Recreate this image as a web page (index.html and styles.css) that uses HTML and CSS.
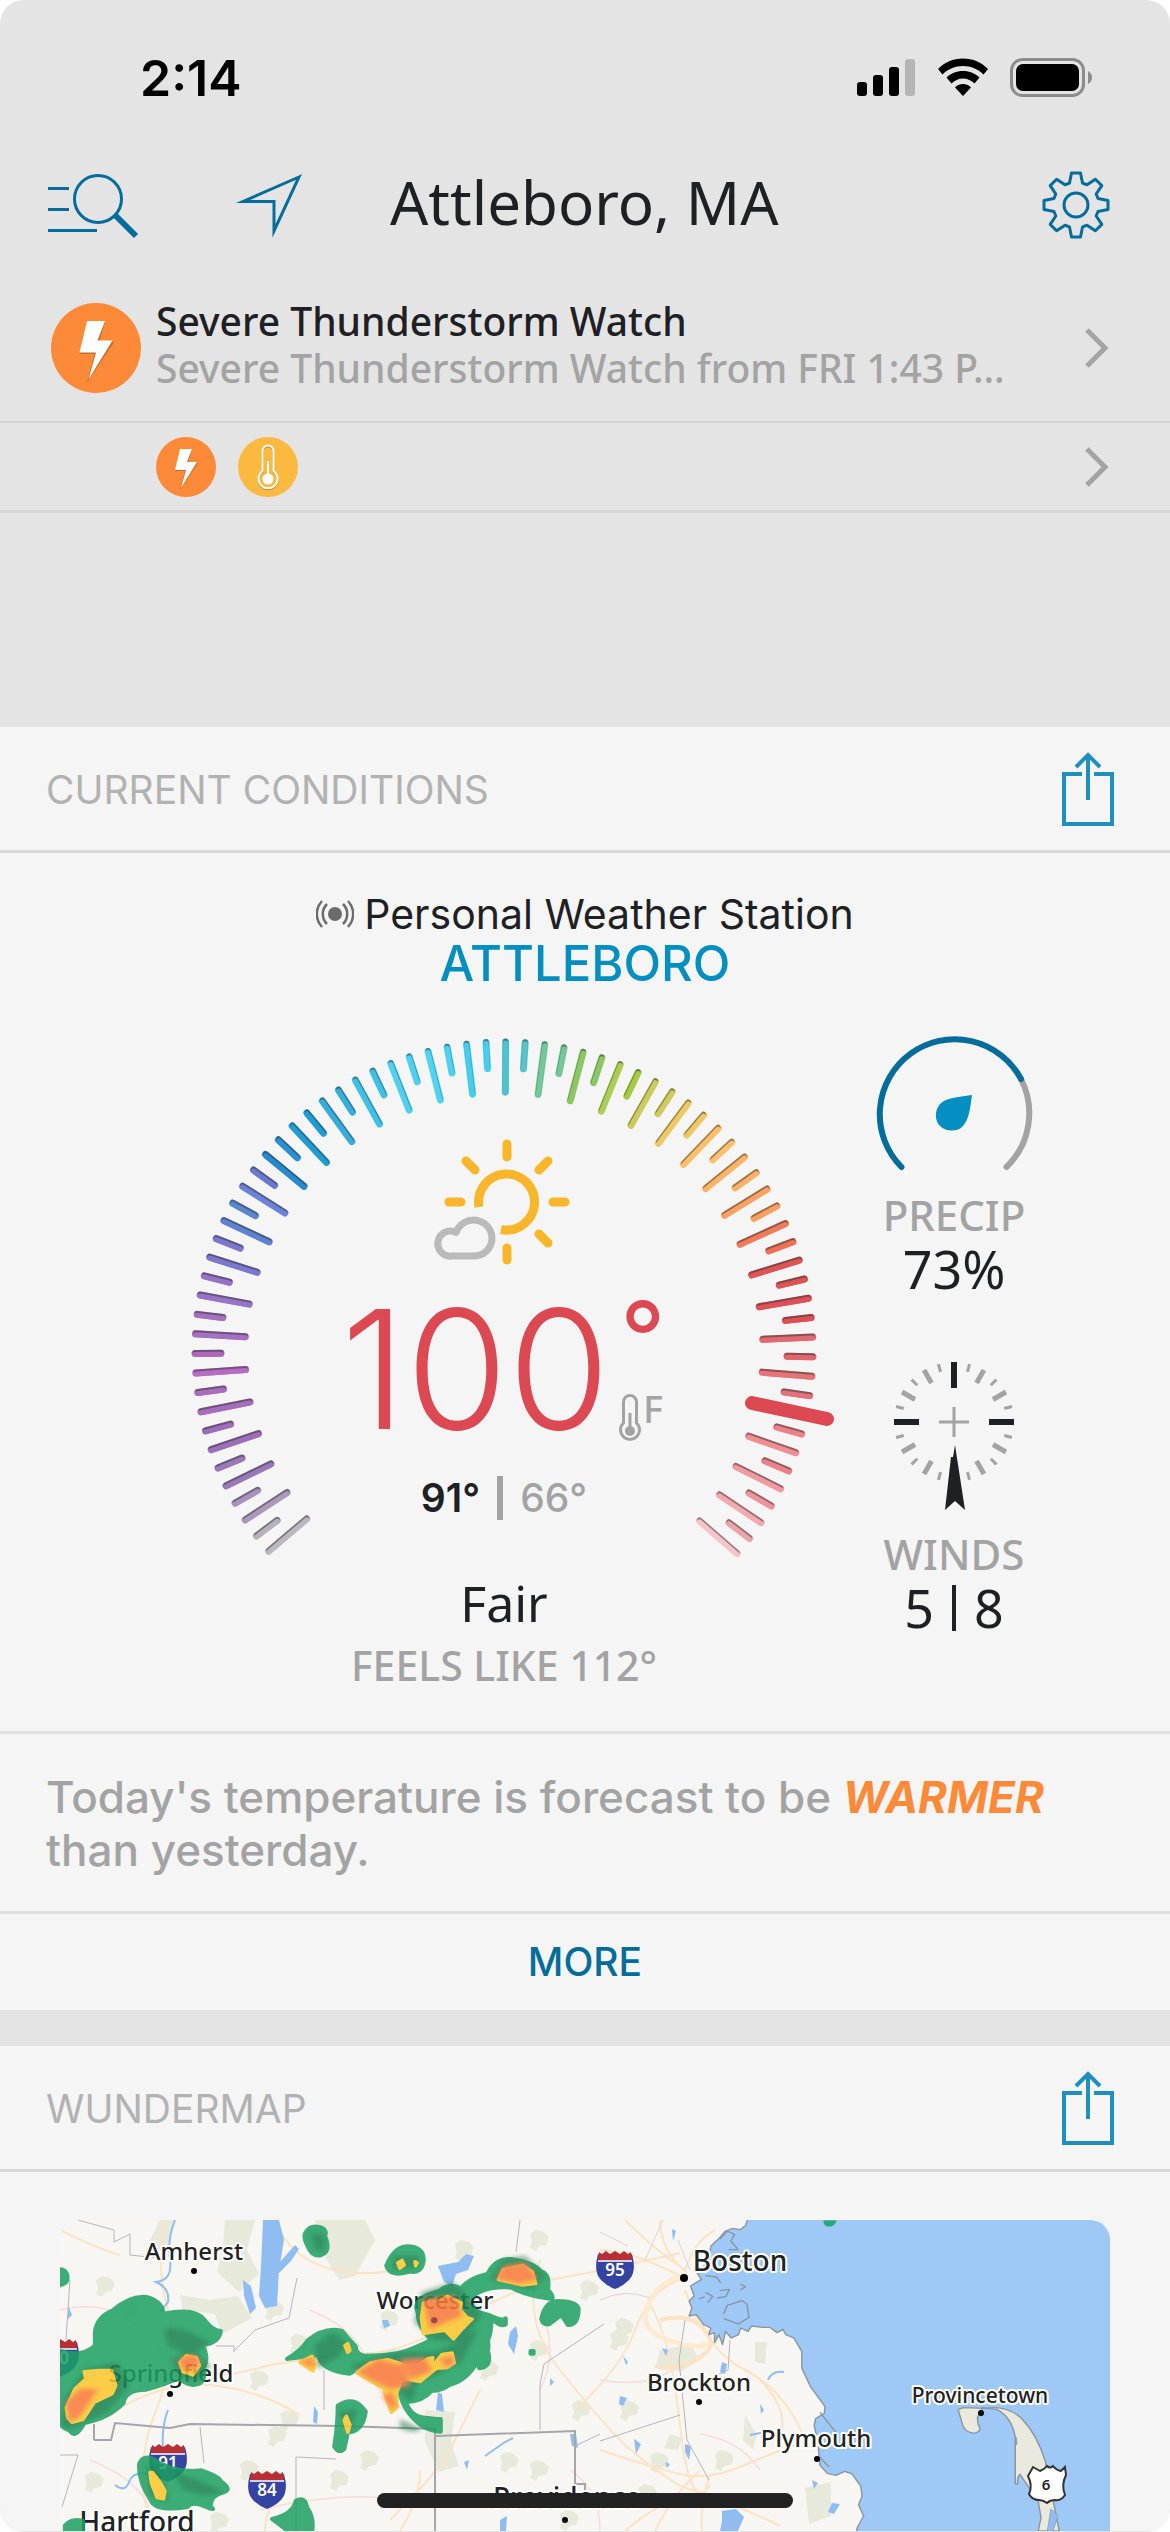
FILE: index.html
```html
<!DOCTYPE html>
<html lang="en">
<head>
<meta charset="utf-8">
<meta name="viewport" content="width=device-width, initial-scale=1">
<title>Attleboro, MA</title>
<link rel="stylesheet" href="styles.css">
</head>
<body>
<div class="screen">
  <div class="status">
    <time class="clock">2:14</time>
    <svg class="status-icons" viewBox="0 0 238 44" aria-hidden="true">
      <rect x="1" y="26" width="10" height="14" rx="3"/><rect x="17" y="19" width="10" height="21" rx="3"/><rect x="33" y="11" width="10" height="29" rx="3"/><rect x="49" y="3" width="10" height="37" rx="3" fill="#b5b5b5"/>
      <path d="M107 2.500c10 0 18.500 4 25 10.500l-4.500 5.500c-5.500-5.500-12.500-8.500-20.500-8.500s-15 3-20.500 8.500l-4.500-5.500c6.500-6.500 15-10.500 25-10.500z"/>
      <path d="M107 15c7 0 12 2.500 16.500 6.500l-5 6c-3-3-7-5-11.500-5s-8.500 2-11.500 5l-5-6c4.500-4 9.500-6.500 16.500-6.500z"/>
      <path d="M107 28c3.500 0 6 1.500 8 3.500l-8 8.500-8-8.500c2-2 4.500-3.500 8-3.500z"/>
      <rect x="155.500" y="3.500" width="72" height="36" rx="11" fill="none" stroke="#8c8c8c" stroke-width="3"/>
      <rect x="160" y="8" width="63" height="27" rx="7"/>
      <path d="M232 15c3 2 4 4 4 6.500s-1 5-4 6.500z" fill="#8c8c8c"/>
    </svg>
  </div>

  <header class="toolbar">
    <button class="icon-btn search" aria-label="Search locations">
      <svg viewBox="0 0 92 68"><g fill="none" stroke="#046d9c" stroke-width="3"><path d="M0 17.500h21M0 38.500h21M0 59.500h49"/><circle cx="50" cy="28" r="23.500"/><path d="M67 44l21 21" stroke-width="6"/></g></svg>
    </button>
    <button class="icon-btn locate" aria-label="Use my location">
      <svg viewBox="0 0 68 68"><path d="M65 6L9 30.500h31V60z" fill="none" stroke="#046d9c" stroke-width="3" stroke-miterlimit="10"/></svg>
    </button>
    <h1 class="city">Attleboro, MA</h1>
    <button class="icon-btn" aria-label="Settings">
      <svg viewBox="-34 -34 68 68"><g fill="none" stroke="#046d9c" stroke-width="3" stroke-linejoin="round"><path d="M-6.500-22L-4.500-32H4.500L6.500-22L11-20.200L19.400-25.800L25.800-19.400L20.200-11L22-6.500L32-4.500V4.500L22 6.500L20.200 11L25.800 19.400L19.400 25.800L11 20.200L6.500 22L4.500 32H-4.500L-6.500 22L-11 20.200L-19.400 25.800L-25.800 19.400L-20.200 11L-22 6.500L-32 4.500V-4.500L-22-6.500L-20.200-11L-25.800-19.400L-19.400-25.800L-11-20.200z"/><circle r="12"/></g></svg>
    </button>
  </header>

  <a class="alert alert-main" href="#alert">
    <svg class="badge-lg" viewBox="0 0 60 60" aria-hidden="true"><circle cx="30" cy="30" r="30" fill="#fd8a39"/><path d="M24 13h12l-4 13h10L24 53l5-19H19z" fill="#a0561f" opacity=".6"/><path d="M24 12h12l-5 13h10L25 51l5-18H19z" fill="#fff"/></svg>
    <span class="alert-text">
      <strong class="alert-title">Severe Thunderstorm Watch</strong>
      <span class="alert-detail">Severe Thunderstorm Watch from FRI 1:43 P...</span>
    </span>
    <svg class="chevron" viewBox="0 0 24 40" aria-hidden="true"><path d="M2 2l18 18L2 38" fill="none" stroke="#a3a3a3" stroke-width="5"/></svg>
  </a>
  <a class="alert alert-more" href="#alerts" aria-label="All alerts">
    <svg class="badge-sm" viewBox="0 0 60 60" aria-hidden="true"><circle cx="30" cy="30" r="30" fill="#fd8a39"/><path d="M24 13h12l-4 13h10L24 53l5-19H19z" fill="#a0561f" opacity=".6"/><path d="M24 12h12l-5 13h10L25 51l5-18H19z" fill="#fff"/></svg>
    <svg class="badge-sm" viewBox="0 0 60 60" aria-hidden="true"><circle cx="30" cy="30" r="30" fill="#fbb940"/><g fill="none" stroke="#a8731a" stroke-width="2" transform="translate(0 1)" opacity=".7"><path d="M24.500 34V14a5.500 5.500 0 0 1 11 0v20a9.500 9.500 0 1 1-11 0z"/></g><path d="M24.500 34V14a5.500 5.500 0 0 1 11 0v20a9.500 9.500 0 1 1-11 0z" fill="none" stroke="#fff" stroke-width="2"/><path d="M30 24v18" stroke="#fff" stroke-width="2"/><circle cx="30" cy="42" r="5.500" fill="#fff"/></svg>
    <svg class="chevron" viewBox="0 0 24 40" aria-hidden="true"><path d="M2 2l18 18L2 38" fill="none" stroke="#a3a3a3" stroke-width="5"/></svg>
  </a>

  <main class="cards">
    <section class="card">
      <div class="card-head">
        <h2 class="card-title">CURRENT CONDITIONS</h2>
        <button class="icon-btn share" aria-label="Share current conditions">
          <svg viewBox="0 0 54 76"><g fill="none" stroke="#1f90bd" stroke-width="4"><path d="M21 22H3v50h48V22H33"/><path d="M27 48V4M15 15L27 3l12 12"/></g></svg>
        </button>
      </div>
      <div class="conditions">
        <div class="station">
          <svg class="signal" viewBox="0 0 38 28" aria-hidden="true"><circle cx="19" cy="14" r="7" fill="#6b6b6b"/><g fill="none" stroke="#6b6b6b" stroke-width="2.500"><path d="M11 4a14 14 0 0 0 0 20M27 4a14 14 0 0 1 0 20M6 1a19 19 0 0 0 0 26M32 1a19 19 0 0 1 0 26"/></g></svg>
          <span>Personal Weather Station</span>
        </div>
        <a class="station-name" href="#station">ATTLEBORO</a>
        <div class="dials">
          <div class="gauge">
            <svg class="gauge-ring" viewBox="0 0 648 560" aria-hidden="true">
              <g id="ticks" stroke-linecap="round"></g>
              <path d="M572 374L647 390" stroke="#dc4952" stroke-width="14" stroke-linecap="round"/>
            </svg>
            <div class="readings">
              <svg class="sky" viewBox="0 0 148 128" aria-hidden="true">
                <g fill="none" stroke="#fab62b" stroke-width="9"><path d="M49 70A28 28 0 1 1 71 92.500"/><g stroke-linecap="round"><path d="M77 7v13M77 111v12M19 65h12M123 65h12M36 24l9 9M118 24l-9 9M118 106l-9-9"/></g></g>
                <path d="M22 119a12.500 12.500 0 1 1 4-23.500A18.500 18.500 0 0 1 62 101a18 18 0 0 1-17 18z" fill="none" stroke="#bababa" stroke-width="7" stroke-linejoin="round"/>
              </svg>
              <div class="temp">
                <span class="temp-value">100</span>
                <span class="temp-side">
                  <span class="degree">°</span>
                  <span class="unit">
                    <svg class="thermo" viewBox="0 0 22 50" aria-hidden="true"><path d="M4.500 29V8a6.500 6.500 0 0 1 13 0v21a9.500 9.500 0 1 1-13 0z" fill="none" stroke="#a3a3a3" stroke-width="3"/><path d="M11 19v18" stroke="#a3a3a3" stroke-width="3"/><circle cx="11" cy="37" r="5" fill="#a3a3a3"/></svg>
                    <span class="unit-letter">F</span>
                  </span>
                </span>
              </div>
              <div class="hilo"><span class="hi">91°</span><span class="bar"></span><span class="lo">66°</span></div>
              <div class="sky-text">Fair</div>
              <div class="feels">FEELS LIKE 112°</div>
            </div>
          </div>
          <div class="stats">
            <svg class="precip" viewBox="0 0 160 150" aria-hidden="true"><g fill="none" stroke-width="6" stroke-linecap="round"><path d="M147 50A75 75 0 0 1 132.500 138" stroke="#a3a3a3"/><path d="M27.500 138A75 75 0 1 1 147 50" stroke="#046d9c"/></g><path d="M98 66c-15 2-26 3-32 9-6 7-5 17 0 22 6 6 18 6 23 0 6-7 7-16 9-31z" fill="#048fc2"/></svg>
            <div class="stat-label">PRECIP</div>
            <div class="stat-value">73%</div>
            <svg class="compass" viewBox="0 0 160 168" aria-hidden="true">
              <g id="rose" stroke="#a3a3a3" fill="none">
                <path d="M65 72h30M80 57v30" stroke-width="3"/>
              </g>
              <path d="M80 12v26M20 72h25M115 72h25" stroke="#1e2024" stroke-width="6"/>
              <path d="M81 95l10 65-10-9-10 9 6-53h2z" fill="#1e2024"/>
            </svg>
            <div class="stat-label">WINDS</div>
            <div class="stat-value winds"><span>5</span><span class="thin-bar"></span><span>8</span></div>
          </div>
        </div>
      </div>
      <p class="forecast">Today's temperature is forecast to be <em class="warmer">WARMER</em> than yesterday.</p>
      <button class="more">MORE</button>
    </section>

    <section class="card">
      <div class="card-head">
        <h2 class="card-title">WUNDERMAP</h2>
        <button class="icon-btn share" aria-label="Share map">
          <svg viewBox="0 0 54 76"><g fill="none" stroke="#1f90bd" stroke-width="4"><path d="M21 22H3v50h48V22H33"/><path d="M27 48V4M15 15L27 3l12 12"/></g></svg>
        </button>
      </div>
      <a class="map" href="#map" aria-label="Open radar map">
        <svg viewBox="0 0 1050 311">
          <defs>
            <filter id="soft"><feGaussianBlur stdDeviation="7"/></filter>
            <g id="interstate"><path d="M-17-15q9 4 17 0 9 4 17 0 5 18-3 26-6 6-14 9-8-3-14-9-8-8-3-26z" fill="#3544a3"/><path d="M-16-17l3 2 4-3 4 3 5-3 5 3 4-3 4 3 3-2 1 8h-34z" fill="#b92f33"/><path d="M-17-8h34" stroke="#fff" stroke-width="1.500"/></g>
            <g id="blob"><path d="M0 4l6-4 8 2 5 5-3 8-7 1-3 5-6-3 2-6z"/></g>
          </defs>
          <rect width="1050" height="311" fill="#f8f6f2"/>

          <!-- woodland and parks -->
          <g fill="#e7e9da">
            <path d="M165 0h30l-8 30 12 24-20 18-22-20 6-24zM255 0h50l10 20-20 36-16 4-18-30zM150 80l28-4 14 22-30 16zM120 75l30 5 5 14-32-4zM365 190l30 2-4 30 8 24-20 6-14-30zM695 122l12 0-2 22-10-2zM745 268l26-6 0 34-22 8zM685 195l12 20-4 14-10-8zM600 130l30-6 10 16-20 12-24-8zM100 0l16 0-8 24-12 8-6-12zM610 214l12 4-4 12-14-2z"/>
            <use href="#blob" x="60" y="80"/><use href="#blob" x="205" y="80"/><use href="#blob" x="230" y="114"/><use href="#blob" x="36" y="56"/><use href="#blob" x="420" y="140"/><use href="#blob" x="470" y="120"/><use href="#blob" x="512" y="180"/><use href="#blob" x="470" y="240"/><use href="#blob" x="440" y="232"/><use href="#blob" x="550" y="110"/><use href="#blob" x="560" y="180"/><use href="#blob" x="578" y="264"/><use href="#blob" x="180" y="240"/><use href="#blob" x="270" y="250"/><use href="#blob" x="220" y="190"/><use href="#blob" x="300" y="230"/><use href="#blob" x="208" y="206"/><use href="#blob" x="520" y="60"/><use href="#blob" x="555" y="98"/><use href="#blob" x="655" y="230"/><use href="#blob" x="25" y="252"/><use href="#blob" x="150" y="292"/><use href="#blob" x="190" y="150"/><use href="#blob" x="320" y="90"/><use href="#blob" x="395" y="20"/><use href="#blob" x="470" y="10"/><use href="#blob" x="500" y="290"/><use href="#blob" x="590" y="232"/>
          </g>

          <!-- roads -->
          <g fill="none" stroke="#fbe3c4" stroke-width="2">
            <path d="M0 165q60-20 100-10t110-10q60-10 100-12t100-40q60-30 90-35t120-25M104 0q-8 50 4 90t-12 100-4 121M0 10q40 20 60 25M215 0q15 40 60 50t90-10M480 40q-20 60 20 110t60 70 60 46q60 20 100 40M620 60q-30 10-45 50t-60 80M590 85q20 30 30 120t30 60M625 70q20 60 60 80t60 70M540 230q60 20 85 25t60-10 50-20M650 255q-10 30-8 56M625 275q-30 10-60 36M360 250q0 30-20 61M225 260q-20 30-20 51M565 0q30 30 60 50M600 0q0 30 26 52M40 200q60-40 110-35t90 30M420 170q-20 40-30 60t-60 70M700 160q30 30 20 60M595 311q20-40 45-60M540 30q30 0 80 26M655 10q-20 10-30 40"/>
            <path d="M480 90q20 40 0 80M30 240q50 20 60 50M0 90q40-10 70 10t50 60M250 90q50 20 60 60t70 50M200 290q80-20 150-10M700 250q-20-30-60-36M540 160q60 10 80-20M510 250q30 20 30 60" stroke="#f7dcd9" stroke-width="1.500"/>
            <path d="M600 100q30-8 45 10t-10 30-40 6" stroke-width="4"/>
            <path d="M628 55q-30 5-40 30t20 35 40 4" stroke-width="5" stroke="#fdebd0"/>
          </g>
          <g fill="none" stroke="#ddd0dc" stroke-width="1">
            <path d="M540 80q25-12 50-2M585 40l18-40M618 20l12 30M540 12l28 14"/>
          </g>

          <!-- lakes and rivers -->
          <g fill="#8fbcf1">
            <path d="M203 0h16l5 20-5 30-2 36-12 2-6-12 2-30zM183 60l8 6 5 22-6 6-6-18zM235 25l4 4-8 12-16 16-3-6zM378 46l20-4 8-8 8 2-6 14-12 4-4 12-8-4zM378 172l4 2 2 18-8-2zM510 214l6 0 2 14-6-2zM450 112l6-6 2 10-4 18-6-10zM322 100h6l2 6-6 2zM254 186l4 6-1 12-4-2zM404 242l5-2-2 10zM490 158l4 4-4 4zM563 136l5 6-2 3zM560 176l7 2-4 8-4-2zM574 219l7 5-5 10zM625 224l6 2-2 14-4-8zM662 291l14-2 8 8-6 14h-18l2-10zM662 142l5 2-2 10-5-2zM752 260l6 3-4 6zM772 283l8 1-6 10-6-2zM612 9l4 2-3 10zM440 300l7-4-1 15h-6z"/>
            <path d="M602 128l6 2-2 6zM700 184l4 6-3 4zM545 30l3 3-3 5zM605 242l5 2-3 4zM8 85l4 10-4 4z"/>
          </g>
          <g fill="none" stroke="#8fbcf1" stroke-width="2">
            <path d="M115 0q-8 20-5 40t-14 22q14 6 12 20l-8 10M108 190q-8 20-4 50l-4 20M55 265q10 8 14-3t20-8M708 160q4-10 16-8M690 215l20-4M425 236l20-14 8-4"/>
          </g>

          <!-- state and county borders -->
          <g fill="none" stroke="#a5a5aa" stroke-width="2">
            <path d="M34 220l0-16M34 220h17l4-17 55 5 20-4 150 2 95 3v102M376 216l139-5v53l10 0v8"/>
            <g stroke-width="1" stroke="#b5b5bb"><path d="M18 0l36 10v12l16-8v21l28 3M140 207l4 36M236 311v-74l40 2M264 150v40M480 210v-46l4-20 60-40M174 132v-6h-18M175 130l20-20 34-12 8-40M460 0l-4 32M10 60l-4 60M540 221l80-26M625 100l-6 40 8 80 22 40M670 120l-2 30-12 6M515 226l25-12M0 235h18l-16 52"/></g>
          </g>

          <!-- ocean -->
          <g transform="translate(540 -21) scale(.3636 .3333)" stroke="#8b959f" stroke-width="4" stroke-linejoin="round">
            <path d="M410 50l-10 30-15 12-20-4-20 8-20 25-20 20-6 40-20 30-12 10 12 20-30 20 10 30-14 15 8 20-8 25 20-4 20 30 20 10-6 20 16-6v30l12-24 10 30 8-40 16 20 20-10 6-20 20 10 10-16 30 4 20 0 20 16 16-10 8 16 22 10 22 40v50l24 56 40 60-2 20-24 16-4 20 10 50 6 70 20 24 24 6 24-12 20 8 24 36 4 30-10 26 14 34-18 36-2 24 12 60h720V50z" fill="#9ec9f7"/>
            <path d="M330 120l20-24 20 10-10 20 20 26-26 0M340 345l10-26 40-14 14 10 6 40-30 20-40-16M290 230l30 4 12 18M385 255l15 8-14 10M290 280l20 12-14 20M330 275l26-4-10 22-24 4M272 300l16-6" fill="none"/>
            <path d="M605 640l44 60M600 770l30 34" fill="none"/>
            <path d="M985 632l14-6 60 2q60-10 100 30 44 50 66 130l38 208h-58l8-40-8-50-50-80-6 10-1 20-6-2v-140q-10-60-50-82l-40-6-14 30 2 20 6 14q-6 14-22 12-20-4-26-22z" fill="#eae9dd"/>
            <path d="M1145 716q-2 16 0 22l2-6zM1240 930l20 20-14 46-16 0z" fill="#8fbcf1" stroke-width="2"/>
          </g>

          <g class="label label-md" text-anchor="middle">
            <text x="134" y="40">Amherst</text><text x="375" y="89">Worcester</text><text x="111" y="162">Springfield</text>
            <text x="639" y="171">Brockton</text><text x="756" y="227">Plymouth</text>
          </g>
          <g class="label label-sm" text-anchor="middle"><text x="920" y="183">Provincetown</text></g>
          <g class="label label-lg" text-anchor="middle"><text x="680" y="51">Boston</text><text x="77" y="312">Hartford</text><text x="507" y="288">Providence</text></g>
          <g fill="#000"><circle cx="134" cy="51" r="3"/><circle cx="110" cy="174" r="3"/><circle cx="624" cy="58" r="4"/><circle cx="639" cy="182" r="3"/><circle cx="757" cy="239" r="3"/><circle cx="921" cy="193" r="3"/><circle cx="505" cy="300" r="3"/></g>
          <g class="shield">
            <use href="#interstate" x="555" y="49"/><text x="555" y="56">95</text>
            <use href="#interstate" x="207" y="269"/><text x="207" y="276">84</text>
            <use href="#interstate" x="108" y="242"/><text x="108" y="249">91</text>
            <use href="#interstate" x="0" y="137"/><text x="4" y="144">0</text>
          </g>
          <path d="M973 247l7 4q5-2 7-5 3 3 6 0 3 4 8 5l4-4 1 8q-5 10-1 20-4 6-10 5-5 0-8 3-4-3-8-3-7 0-10-6 4-8-1-18z" fill="#fff" stroke="#333" stroke-width="2"/>
          <text class="us-route" x="986" y="270">6</text>

          <!-- radar -->
          <g transform="translate(-10 -21) scale(.3571 .3333)" stroke-linejoin="round" opacity=".86">
            <g fill="#1fa163" stroke="#1fa163" stroke-width="12">
              <path d="M28 211q16 0 20 18t-10 26l-14 6zM126 400q4-46 50-66 50-46 94-40 44 12 48 50 90-20 116 20 20 30 44 32-4 36-50 42 18 40 2 70 10 50-30 50-26-6-40-20-40 20-90 34-60 0-64 40-40 46-110 60-26 50-40 24-20-10-28-20V456q60 20 98-16z"/>
              <path d="M714 104q12-26 40-20 24 8 16 26 18 46-10 58-26 8-40-30-10-20-6-34zM942 200q20-54 56-58 52 0 48 46-6 36-38 30-56 18-66-18z"/>
              <path d="M664 480q40-26 58-56 48-42 96-28 20 26 38 46 0 24 24 28 90 0 130-20 40-16 56-28-36-40-36-80-20-46 60-66 30-26 60-8 22-30 76-44 20-46 64-44 64 10 84 36 28 10 20 56 18 20 12 28-76-10-114-34-80-8-124 40 18 36 62 42 38 20 46 10v18q-16 10-40-18 0 46-10 66 8 56-30 66-30 56-78 68-20 18-50 18-22 30-72 34 18 46 54 46 32 4 44 4v38q-26 0-54-18-50-40-60-98-56-30-48-50-28-20-28-46l-64 38q-84-10-88-56z"/>
              <path d="M806 620q46-34 78 18-8 60-50 62l-10 50q-16 16-28-8 10-60 10-122zM1192 480q18-34 36-16 8 42-26 44-8-14-10-28zM1376 360q10-52 44-54 54 0 60 22 0 52-30 50l-18-30-34 28q-18 2-22-16zM250 794q10-26 36-16 60 46 138 36 54 20 54 32 34 26 8 34-38 10-36 44 14 10-4 4-50-24-60-4-90 16-104-20-36-60-32-110zM622 960q60-16 66-54 26-16 32 20 20 30 14 70H666zM42 980q20-24 50-14v36H42zM1346 456h8v8h-8z"/>
            </g>
            <g fill="#076b3d" filter="url(#soft)" opacity=".55">
              <path d="M320 390q50-10 90 20l40 20-60 40-60-30zM40 600l60-90 90-20 30 70-60 80-100 50-30-10zM740 440l50-40 40 30-20 40-60 40zM840 500l120-40 120 0 60-30 60-40-50 100-70 40-50 20-20 60-60-60-80-30zM1020 370l20-90 90-30 80 90-50 90-90-10zM1230 240l40-60 60-10 60 60-40 40zM730 100l40 10-6 50-24-10zM960 170l70 0 0 36-70 4zM340 480l60-30 50 50-40 50-50-20zM350 820l80 30 60 30-60 10-60-20zM270 790l50 60 10 60-50-20zM810 640l50-10-20 70zM980 660l60 30-20 10-40-10z"/>
            </g>
            <g fill="#fdc62c" stroke="#fdc62c" stroke-width="10">
              <path d="M46 626l24-56 30-30-4-22 40-4 36 0 12 46-10 24-50 26-32 52-30 8-12-14zM1046 312l46-6 20-14 40 20-4 20 20 24 14 4-26 28-26 32-24-26-60 10-6-48zM860 520l36-28 50-10 50 16 40-2 20-16 16-4-4 30-46 10 46-10 30-40 28-4 6 30-20 14-30 2-46 40-50-10-16 46 2 40-16 16-12-36-10-36-56-34zM1256 242l14-30 54-12 26 18 10 36-38 4zM700 490l34-18 8 24-6 20zM364 490l18-20 28 6 8 24-18 28-28-10zM280 820l8 0 20 30 14 26-4 24-18-4-16-44zM974 192l12-8 6 14-12 10zM1022 188l6 4-4 8zM826 440l8-6 6 20-6 6zM824 664l6-12 10 26-6 22z"/>
            </g>
            <g fill="#f8703a" filter="url(#soft)" opacity=".9">
              <path d="M45 610l40-40 50 0-50 80-30 20zM1044 300l90-10 20 60-90 40zM860 520l60-40 70 20 20 60-60 10zM980 480l70-5 20 40-60 26zM1250 240l20-40 60-10 36 50-50 14zM360 480l40-15 20 20-10 30-40-5zM700 490l35-14 8 30zM930 590l30-10 10 40-10 14zM1090 480l36-10 6 20-20 16z"/>
            </g>
            <circle cx="1076" cy="364" r="9" fill="#8f2e22"/>
          </g>
          <path d="M763 0h14q-2 7-8 7t-6-7z" fill="#2aa583" stroke="#6fd0bf"/>
        </svg>
      </a>
    </section>
  </main>
  <div class="home-bar"></div>
</div>
<script src="script.js"></script>
</body>
</html>
```
FILE: styles.css
```css
* { box-sizing: border-box; }

body {
  margin: 0;
  background: #fff;
  color: #1e2024;
  font-family: "Noto Sans", sans-serif;
}

h1, h2, p { margin: 0; font-weight: 400; }
a { color: inherit; text-decoration: none; }
svg { display: block; }

button {
  padding: 0;
  border: 0;
  background: none;
  color: inherit;
  font: inherit;
}

.screen {
  min-height: 100vh;
  overflow: hidden;
  border-radius: 24px;
  background: #e4e4e4;
}

/* status bar */
.status {
  display: flex;
  align-items: center;
  justify-content: space-between;
  height: 156px;
  padding: 0 76px 0 140px;
}
.clock {
  color: #000;
  font: 600 50px/60px Inter, sans-serif;
}
.status-icons { width: 238px; height: 44px; }

/* toolbar */
.toolbar {
  display: flex;
  align-items: center;
  height: 98px;
  padding: 0 60px 0 48px;
}
.icon-btn { flex: none; width: 68px; height: 68px; }
.icon-btn svg { width: 100%; height: 100%; }
.search { width: 92px; }
.locate { margin-left: 94px; }
.city {
  flex: 1;
  margin: 0 0 0 88px;
  padding-bottom: 6px;
  font-size: 60px;
  line-height: 80px;
}

/* alerts */
.alert { display: flex; align-items: center; padding-right: 61px; }
.alert-main {
  align-items: flex-start;
  height: 169px;
  padding-top: 49px;
  padding-left: 51px;
  border-bottom: 2px solid #d2d2d2;
}
.badge-lg { flex: none; width: 90px; height: 90px; }
.alert-text {
  display: flex;
  flex: 1;
  flex-direction: column;
  min-width: 0;
  margin-top: -6px;
  padding-left: 15px;
  font-size: 39px;
  font-weight: 500;
  line-height: 47px;
}
.alert-title { font-weight: 500; }
.alert-detail { color: #a3a3a3; white-space: nowrap; }
.chevron { flex: none; width: 24px; height: 40px; margin-left: auto; }
.alert-main .chevron { margin-top: 25px; }
.alert-more {
  gap: 22px;
  height: 90px;
  padding-left: 156px;
  border-bottom: 3px solid #d7d7d7;
}
.badge-sm { width: 60px; height: 60px; }

/* cards */
.cards {
  display: flex;
  flex-direction: column;
  gap: 36px;
  margin-top: 214px;
}
.card { background: #f5f5f5; }
.card-head {
  display: flex;
  align-items: center;
  justify-content: space-between;
  height: 126px;
  padding: 3px 55px 0 46px;
  border-bottom: 3px solid #d9d9d9;
}
.card-title {
  color: #b2b2b2;
  font: 400 39px/48px Inter, sans-serif;
}
.share { width: 54px; height: 76px; }

.conditions { padding: 36px 0; border-bottom: 3px solid #dfdfdf; }
.station {
  display: flex;
  align-items: center;
  justify-content: center;
  gap: 10px;
  font: 400 41px/50px Inter, sans-serif;
}
.signal { width: 38px; height: 28px; }
.station-name {
  display: block;
  color: #048fc2;
  font: 500 49px/50px Inter, sans-serif;
  text-align: center;
}

.dials {
  display: flex;
  justify-content: space-between;
  margin-top: 40px;
  padding: 0 102px 0 180px;
}
.gauge { display: grid; width: 648px; }
.gauge-ring {
  grid-area: 1 / 1;
  width: 648px;
  height: 560px;
  overflow: visible;
}
.readings {
  display: flex;
  grid-area: 1 / 1;
  flex-direction: column;
  align-items: center;
  padding-top: 108px;
}
.sky { width: 148px; height: 128px; }
.temp {
  display: flex;
  gap: 9px;
  margin-top: 12px;
  color: #dc4952;
  font-family: Inter, sans-serif;
}
.temp-value { font-size: 165px; font-weight: 300; line-height: 184px; }
.temp-side { display: flex; flex-direction: column; width: 48px; }
.degree { height: 117px; font-size: 100px; line-height: 120px; text-align: center; }
.unit { display: flex; color: #a3a3a3; }
.thermo { width: 22px; height: 50px; }
.unit-letter { padding-left: 2px; font: 500 38px/28px "Noto Sans", sans-serif; }

.hilo {
  display: flex;
  align-items: center;
  gap: 17px;
  height: 46px;
  margin-top: 14px;
  font: 500 39px/46px Inter, sans-serif;
}
.hi { font-weight: 600; }
.lo { color: #a3a3a3; }
.bar { width: 6px; height: 44px; background: #a3a3a3; }
.sky-text { margin-top: 52px; font-size: 50px; line-height: 60px; }
.feels {
  margin-top: 2px;
  color: #a3a3a3;
  font-size: 41px;
  font-weight: 500;
  line-height: 60px;
}

.stats {
  display: flex;
  flex-direction: column;
  align-items: center;
  width: 228px;
}
.precip { width: 160px; height: 150px; }
.stat-label {
  margin-top: 10px;
  color: #a3a3a3;
  font-size: 42px;
  font-weight: 500;
  line-height: 52px;
}
.stat-value { font-size: 52px; line-height: 56px; }
.compass { width: 160px; height: 168px; margin-top: 53px; }
.winds { display: flex; align-items: center; gap: 18px; }
.thin-bar { width: 4px; height: 46px; background: #1e2024; }

.forecast {
  height: 180px;
  padding: 37px 46px 0;
  border-bottom: 3px solid #dfdfdf;
  color: #a3a3a3;
  font: 500 44px/53px Inter, sans-serif;
}
.warmer { color: #fd8a39; font-weight: 700; }
.more {
  display: block;
  width: 100%;
  height: 96px;
  color: #046d9c;
  font: 500 39px/48px Inter, sans-serif;
}

/* map */
.map {
  display: block;
  margin: 48px 60px 0;
  overflow: hidden;
  border-radius: 20px 20px 0 0;
}
.map svg { width: 100%; height: auto; }
.label {
  fill: #222;
  stroke: #fff;
  stroke-width: 4px;
  stroke-linejoin: round;
  paint-order: stroke;
  font-family: "Noto Sans", sans-serif;
  font-weight: 500;
}
.label-sm { font-size: 21px; }
.label-md { font-size: 24px; }
.label-lg { font-size: 28px; }
.shield {
  fill: #fff;
  font: 600 17px "Noto Sans", sans-serif;
  text-anchor: middle;
}
.us-route { fill: #222; font: 600 15px "Noto Sans", sans-serif; text-anchor: middle; }

.home-bar {
  position: fixed;
  bottom: 24px;
  left: 50%;
  width: 416px;
  height: 15px;
  margin-left: -208px;
  border-radius: 8px;
  background: #222;
}
```
FILE: script.js
```js
const SVG = 'http://www.w3.org/2000/svg';

// One colour per tick, from the cold end of the scale to the hot end.
const colours = (
  'bdb5bf b9b0be ab98bd a893bf 9879b9 9879b9 9c6fba 9c6dbb a76ebc aa6dbd b56dc3 ad68bc ' +
  'a56fc2 a56fc2 9873c8 9673c8 7b78cf 7c78d0 5f82d2 5a88cf 6c82dc 6a7ad0 278bcf 2a8fd3 ' +
  '209dd2 219dd3 35addd 38aedd 3fc0e6 3fc0e6 4fd0ee 4fd0ee 50d4f2 4fd0ee 46cdeb 4acdec ' +
  '4fc3cb 55c5cb 73c798 73c798 8bc865 8bc865 abcd55 a5cb45 cbcb5e cfcc5e ecc965 ecc965 ' +
  'fcc06b fbc26d fbb568 fbb264 fba161 f9a060 f27b5c ee7058 dd5555 dc5555 e05058 dc5055 ' +
  'e06a70 e0666c e57378 e0747a e57378 ec8288 f08e94 ec8288 f19a9f ee959b f3aab0 eca5aa f5c5ca'
).split(' ');

function line(parent, cx, cy, r1, r2, degrees, attrs) {
  const a = degrees * Math.PI / 180;
  const el = document.createElementNS(SVG, 'line');
  el.setAttribute('x1', cx + r1 * Math.sin(a));
  el.setAttribute('y1', cy - r1 * Math.cos(a));
  el.setAttribute('x2', cx + r2 * Math.sin(a));
  el.setAttribute('y2', cy - r2 * Math.cos(a));
  for (const name in attrs) el.setAttribute(name, attrs[name]);
  parent.appendChild(el);
}

const ticks = document.getElementById('ticks');
const POINTER = 28;
const STEP = 3.63;
for (let i = -36; i <= 36; i++) {
  if (i === POINTER) continue;
  const colour = '#' + colours[i + 36];
  const inner = i % 2 ? 283 : 259;
  const angle = i * STEP + 0.3;
  line(ticks, 324, 322, inner, 309, angle, { stroke: colour, 'stroke-width': 7 });
  line(ticks, 324, 321, inner, 309, angle, { stroke: '#333', 'stroke-opacity': .5, 'stroke-width': 5 });
  line(ticks, 324, 323, inner, 309, angle, { stroke: colour, 'stroke-width': 5 });
}

const rose = document.getElementById('rose');
for (let i = 1; i < 24; i++) {
  if (i % 6 === 0) continue;
  const major = i % 2 === 0;
  line(rose, 80, 72, major ? 45 : 52, 60, i * 15, { 'stroke-width': major ? 5 : 3 });
}
```
